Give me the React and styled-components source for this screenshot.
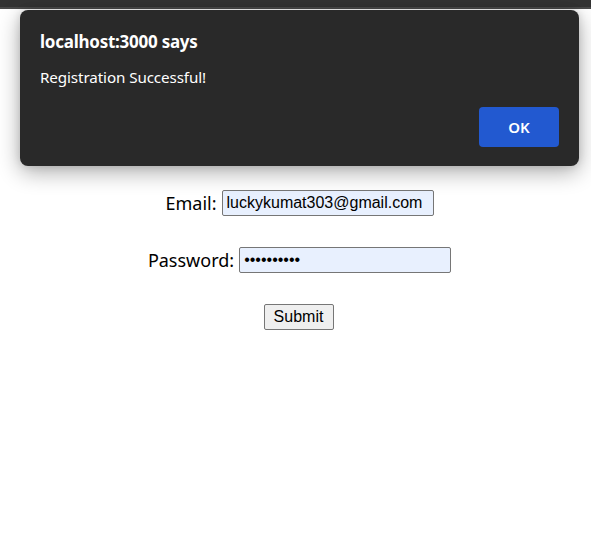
import React from "react";
import styled, { createGlobalStyle } from "styled-components";

const Global = createGlobalStyle`
  html, body { margin: 0; padding: 0; background: #ffffff; }
  #root { min-height: 543px; }
`;

const Page = styled.div`
  position: relative;
  width: 591px;
  height: 543px;
  overflow: hidden;
  background: #ffffff;
  display: flex;
  flex-direction: column;
`;

const ChromeBar = styled.div`
  height: 7px;
  background: #333333;
  border-bottom: 2px solid #4a4a4a;
  flex: none;
`;

const Form = styled.form`
  display: flex;
  flex-direction: column;
  align-items: center;
  gap: 31px;
  padding-top: 181px;
  padding-left: 8px;
`;

const Row = styled.div`
  display: flex;
  align-items: center;
  gap: 5px;
  height: 26px;
  margin-right: ${(p) => p.$shift || 0}px;
`;

const Label = styled.label`
  font-family: "Noto Sans", "Open Sans", sans-serif;
  font-size: 18px;
  color: #000000;
`;

const Input = styled.input`
  box-sizing: border-box;
  width: 212px;
  height: 26px;
  padding: 1px 4px;
  border: 1px solid #767676;
  border-radius: 2px;
  background: #e8f0fe;
  font-family: "Liberation Sans", Arial, sans-serif;
  font-size: 16px;
  color: #000;
  outline: none;
`;

const SubmitButton = styled.button`
  box-sizing: border-box;
  width: 70px;
  height: 26px;
  border: 1px solid #767676;
  border-radius: 2px;
  background: #efefef;
  font-family: "Liberation Sans", Arial, sans-serif;
  font-size: 16px;
  color: #000;
  padding: 0;
`;

const Dialog = styled.div`
  position: absolute;
  left: 20px;
  top: 10px;
  width: 559px;
  height: 156px;
  box-sizing: border-box;
  background: #292929;
  border-radius: 8px;
  box-shadow: 0 6px 22px rgba(0, 0, 0, 0.33), 0 0 8px rgba(0, 0, 0, 0.12);
  padding: 22px 20px 19px 20px;
  display: flex;
  flex-direction: column;
  font-family: "Noto Sans", "Open Sans", sans-serif;
  color: #ffffff;
`;

const Title = styled.div`
  font-size: 17px;
  font-weight: 700;
  line-height: 20px;
  letter-spacing: -0.25px;
`;

const Message = styled.div`
  margin-top: 15px;
  font-size: 15.2px;
  line-height: 20px;
  letter-spacing: -0.1px;
`;

const Actions = styled.div`
  margin-top: auto;
  display: flex;
  justify-content: flex-end;
`;

const OkButton = styled.button`
  width: 80px;
  height: 40px;
  border: none;
  border-radius: 4px;
  background: #2259d0;
  color: #ffffff;
  font-family: "Noto Sans", "Open Sans", sans-serif;
  font-size: 15px;
  font-weight: 600;
`;

export default function App() {
  return (
    <>
      <Global />
      <Page>
        <ChromeBar />
        <Form onSubmit={(e) => e.preventDefault()}>
          <Row>
            <Label>Email:</Label>
            <Input type="text" readOnly value="luckykumat303@gmail.com" />
          </Row>
          <Row>
            <Label>Password:</Label>
            <Input type="password" readOnly value="lucky12345" />
          </Row>
          <Row $shift={2}>
            <SubmitButton type="submit">Submit</SubmitButton>
          </Row>
        </Form>
        <Dialog role="alertdialog">
          <Title>localhost:3000 says</Title>
          <Message>Registration Successful!</Message>
          <Actions>
            <OkButton>OK</OkButton>
          </Actions>
        </Dialog>
      </Page>
    </>
  );
}
